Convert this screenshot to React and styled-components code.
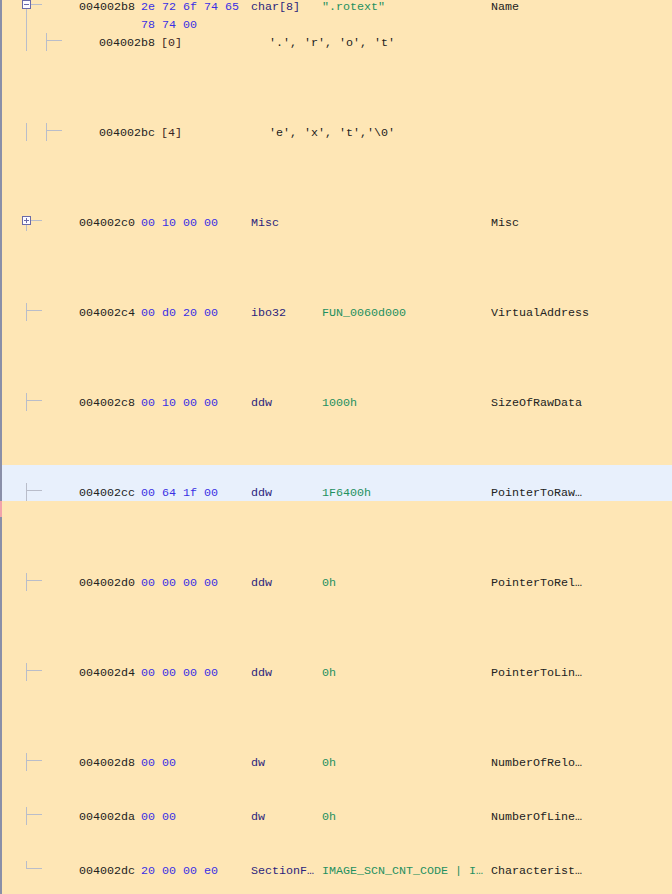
import React from 'react'
import styled, { createGlobalStyle } from 'styled-components'

const GlobalStyle = createGlobalStyle`
    html, body {
        margin: 0;
        padding: 0;
        background: #fee6b5;
        overflow: hidden;
    }
`

const LINE_H = 18
const TREE = '#b9bdca'
const BOX = '#6a6aa8'

const Listing = styled.div`
    min-height: 100vh;
    margin-top: -3px;
    padding-bottom: 3px;
    background: #fee6b5;
    border-left: 2px solid #8a8fa8;
    font-family: "Liberation Mono", "Courier New", monospace;
    font-size: 11.667px;
    color: #222;
`

const Line = styled.div`
    display: flex;
    height: ${LINE_H}px;
    line-height: 20px;
    white-space: pre;
    overflow: visible;
`

const Gap = styled.div`
    height: ${p => p.$lines * LINE_H}px;
`

const Selected = styled.div`
    background: #e8f0fc;
`

// the little red caret mark sitting on the left border under the selection
const Cursor = styled.div`
    margin-left: -2px;
    height: 16px;
    border-left: 2px solid #f2a3ab;
`

const Cell = styled.span`
    flex: ${p => (p.$w ? `0 0 ${p.$w}px` : '1 1 auto')};
    color: ${p => p.$color || '#222'};
    overflow: hidden;
`

const TreeCell = styled.span`
    flex: 0 0 ${p => p.$w}px;
    height: ${LINE_H}px;
    svg { display: block; }
`

const Tree = ({ kind, w = 77 }) => {
    const h = LINE_H
    return (
        <TreeCell $w={w}>
            <svg width={w} height={h} shapeRendering="crispEdges">
                {(kind === 'open' || kind === 'closed') && (
                    <g>
                        <line x1={29} y1={7.5} x2={40} y2={7.5} stroke={TREE} />
                        <line x1={24.5} y1={12} x2={24.5} y2={h} stroke={TREE} />
                        <rect x={20.5} y={3.5} width={8} height={8} fill="#fdfbff" stroke={BOX} />
                        <line x1={22} y1={7.5} x2={27} y2={7.5} stroke={BOX} />
                        {kind === 'closed' && <line x1={24.5} y1={5} x2={24.5} y2={10} stroke={BOX} />}
                    </g>
                )}
                {(kind === 'pipe' || kind === 'tee' || kind === 'nested') && (
                    <line x1={24.5} y1={0} x2={24.5} y2={h} stroke={TREE} />
                )}
                {kind === 'tee' && <line x1={25} y1={7.5} x2={40} y2={7.5} stroke={TREE} />}
                {kind === 'end' && (
                    <g>
                        <line x1={24.5} y1={0} x2={24.5} y2={8} stroke={TREE} />
                        <line x1={25} y1={7.5} x2={40} y2={7.5} stroke={TREE} />
                    </g>
                )}
                {kind === 'nested' && (
                    <g>
                        <line x1={44.5} y1={0} x2={44.5} y2={h} stroke={TREE} />
                        <line x1={45} y1={7.5} x2={60} y2={7.5} stroke={TREE} />
                    </g>
                )}
            </svg>
        </TreeCell>
    )
}

const C = {
    addr: '#222',
    bytes: '#3a30e4',
    mnem: '#2c1f7c',
    op: '#1f9060',
    index: '#3a2424',
    field: '#222',
}

const CodeUnit = ({ tree = 'tee', addr, bytes, mnem, op, field }) => (
    <Line>
        <Tree kind={tree} />
        <Cell $w={62} $color={C.addr}>{addr}</Cell>
        <Cell $w={110} $color={C.bytes}>{bytes}</Cell>
        <Cell $w={71} $color={C.mnem}>{mnem}</Cell>
        <Cell $w={169} $color={C.op}>{op}</Cell>
        <Cell $color={C.field}>{field}</Cell>
    </Line>
)

const Element = ({ addr, index, value }) => (
    <Line>
        <Tree kind="nested" w={97} />
        <Cell $w={62} $color={C.addr}>{addr}</Cell>
        <Cell $w={108} $color={C.index}>{index}</Cell>
        <Cell $color="#222">{value}</Cell>
    </Line>
)

const App = () => {
    return (
        <>
            <GlobalStyle />
            <Listing>
                <CodeUnit tree="open" addr="004002b8" bytes="2e 72 6f 74 65" mnem="char[8]" op={'".rotext"'} field="Name" />
                <Line>
                    <Tree kind="pipe" />
                    <Cell $w={62} />
                    <Cell $color={C.bytes}>78 74 00</Cell>
                </Line>
                <Element addr="004002b8" index="[0]" value="'.', 'r', 'o', 't'" />
                <Gap $lines={4} />
                <Element addr="004002bc" index="[4]" value="'e', 'x', 't','\0'" />
                <Gap $lines={4} />
                <CodeUnit tree="closed" addr="004002c0" bytes="00 10 00 00" mnem="Misc" field="Misc" />
                <Gap $lines={4} />
                <CodeUnit addr="004002c4" bytes="00 d0 20 00" mnem="ibo32" op="FUN_0060d000" field="VirtualAddress" />
                <Gap $lines={4} />
                <CodeUnit addr="004002c8" bytes="00 10 00 00" mnem="ddw" op="1000h" field="SizeOfRawData" />
                <Gap $lines={3} />
                <Selected>
                    <Gap $lines={1} />
                    <CodeUnit addr="004002cc" bytes="00 64 1f 00" mnem="ddw" op="1F6400h" field="PointerToRaw…" />
                </Selected>
                <Gap $lines={4}>
                    <Cursor />
                </Gap>
                <CodeUnit addr="004002d0" bytes="00 00 00 00" mnem="ddw" op="0h" field="PointerToRel…" />
                <Gap $lines={4} />
                <CodeUnit addr="004002d4" bytes="00 00 00 00" mnem="ddw" op="0h" field="PointerToLin…" />
                <Gap $lines={4} />
                <CodeUnit addr="004002d8" bytes="00 00" mnem="dw" op="0h" field="NumberOfRelo…" />
                <Gap $lines={2} />
                <CodeUnit addr="004002da" bytes="00 00" mnem="dw" op="0h" field="NumberOfLine…" />
                <Gap $lines={2} />
                <CodeUnit tree="end" addr="004002dc" bytes="20 00 00 e0" mnem="SectionF…" op="IMAGE_SCN_CNT_CODE | I…" field="Characterist…" />
            </Listing>
        </>
    )
}

export default App
